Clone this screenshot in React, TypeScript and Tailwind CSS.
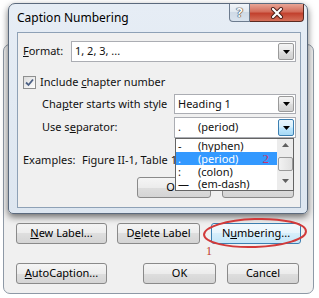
import React from "react";

function Tri({ color = "#000" }: { color?: string }) {
  return (
    <svg width="7" height="4" viewBox="0 0 7 4">
      <path d="M0 0 H7 L3.5 4 Z" fill={color} />
    </svg>
  );
}

function Combo({ children, active }: { children: React.ReactNode; active?: boolean }) {
  return (
    <div className="flex h-full w-full border border-[#abadb3] bg-white">
      <div className="flex flex-1 items-center whitespace-nowrap pl-[3px]">{children}</div>
      <div
        className={`m-[1px] flex w-[16px] items-center justify-center rounded-[2px] border ${
          active
            ? "border-[#3c7fb1] bg-[linear-gradient(#eaf6fd,#d9f0fc_45%,#bee6fd_55%,#a7d9f5)]"
            : "border-[#9a9a9a] bg-[linear-gradient(#f4f4f4,#e8e8e8_45%,#dcdcdc_55%,#d0d0d0)]"
        }`}
      >
        <Tri />
      </div>
    </div>
  );
}

function WinButton({
  children,
  className = "",
  hover,
}: {
  children: React.ReactNode;
  className?: string;
  hover?: boolean;
}) {
  return (
    <div
      className={`flex h-[21px] shrink-0 items-center justify-center whitespace-nowrap rounded-[3px] border text-black ${
        hover
          ? "border-[#3c7fb1] bg-[linear-gradient(#f4fafe,#e6f4fc_50%,#d6eefb_50%,#c5e6f8)]"
          : "border-[#8a8a8a] bg-[linear-gradient(#f5f5f5,#ececec_50%,#dedede_50%,#d4d4d4)]"
      } ${className}`}
    >
      {children}
    </div>
  );
}

export default function App() {
  return (
    <div className="relative h-[298px] w-[319px] overflow-hidden bg-white font-['Noto_Sans',sans-serif] text-[11px] text-[#111]">
      {/* Underlying Caption dialog */}
      <div className="absolute left-[3px] top-[44px] flex h-[250px] w-[311px] flex-col justify-end rounded-[7px] border border-[#8e99a6] bg-[#f0f0f0] pb-[9px] pl-[12px]">
        <div className="flex">
          <WinButton className="w-[91px]">
            <span>
              <u>N</u>ew Label...
            </span>
          </WinButton>
          <WinButton className="ml-[10px] w-[83px]">
            <span>
              D<u>e</u>lete Label
            </span>
          </WinButton>
          <WinButton className="ml-[11px] w-[90px]" hover>
            <span>
              N<u>u</u>mbering...
            </span>
          </WinButton>
        </div>
        <div className="mt-[19px] flex">
          <WinButton className="w-[91px]">
            <span>
              <u>A</u>utoCaption...
            </span>
          </WinButton>
          <WinButton className="ml-[36px] w-[73px]">OK</WinButton>
          <WinButton className="ml-[11px] w-[72px]">Cancel</WinButton>
        </div>
      </div>

      {/* Caption Numbering dialog */}
      <div className="absolute left-[8px] top-[3px] flex h-[211px] w-[300px] flex-col rounded-t-[7px] rounded-b-[5px] border border-[#5b6a7d] bg-[linear-gradient(#e6edf5,#dde6f0)] shadow-[0_3px_7px_rgba(0,0,0,0.55)]">
        <div className="relative h-[28px] shrink-0">
          <div className="whitespace-nowrap pl-[8px] pt-[5px] text-[12px] leading-[18px] text-black">Caption Numbering</div>
          <div className="absolute right-[3px] top-0 flex h-[18px]">
            <div className="flex w-[21px] items-center justify-center rounded-bl-[4px] border border-t-0 border-[#6c7b8e] bg-[linear-gradient(#f1f5f9,#dfe7ef_50%,#cfdae6_50%,#d9e3ee)]">
              <span className="text-[13px] font-bold leading-none text-white [text-shadow:0_0_1px_#333,0_0_1px_#333,0_0_1px_#333]">
                ?
              </span>
            </div>
            <div className="flex w-[54px] items-center justify-center rounded-br-[4px] border border-l-0 border-t-0 border-[#5a2a22] bg-[linear-gradient(#e8a595,#d36d5b_45%,#c2412e_55%,#d5705a)]">
              <svg width="14" height="12" viewBox="0 0 14 12">
                <path d="M3 2 L11 10 M11 2 L3 10" stroke="#4a1e18" strokeWidth="4" strokeLinecap="round" />
                <path d="M3 2 L11 10 M11 2 L3 10" stroke="#ffffff" strokeWidth="2.2" strokeLinecap="round" />
              </svg>
            </div>
          </div>
        </div>

        <div className="mb-[5px] ml-[8px] mr-[6px] flex flex-1 flex-col border border-[#8ea1b6] bg-[#f0f0f0] pl-[5px] pr-[4px]">
          {/* Format */}
          <div className="mt-[8px] flex h-[21px] items-center">
            <div className="w-[48px] whitespace-nowrap">
              <u>F</u>ormat:
            </div>
            <div className="h-full flex-1">
              <Combo>1, 2, 3, ...</Combo>
            </div>
          </div>

          {/* Include chapter number */}
          <div className="mt-[14px] flex h-[13px] items-center">
            <div className="flex h-[13px] w-[13px] items-center justify-center border border-[#8e8f8f] bg-[linear-gradient(135deg,#dcdcdc,#ffffff)]">
              <svg width="9" height="9" viewBox="0 0 9 9">
                <path d="M1 4.5 L3.5 7 L8 1.5" fill="none" stroke="#4d6185" strokeWidth="1.8" />
              </svg>
            </div>
            <span className="ml-[4px] whitespace-nowrap">
              Include <u>c</u>hapter number
            </span>
          </div>

          {/* Chapter starts with style */}
          <div className="mt-[5px] flex h-[20px] items-center">
            <div className="w-[151px] whitespace-nowrap pl-[19px]">
              Cha<u>p</u>ter starts with style
            </div>
            <div className="h-full w-[122px]">
              <Combo>Heading 1</Combo>
            </div>
          </div>

          {/* Use separator */}
          <div className="mt-[3px] flex h-[21px] items-center">
            <div className="w-[151px] whitespace-nowrap pl-[19px]">
              Use s<u>e</u>parator:
            </div>
            <div className="h-full w-[122px]">
              <Combo active>
                <span className="w-[20px]">.</span>
                <span>(period)</span>
              </Combo>
            </div>
          </div>

          {/* Examples */}
          <div className="mt-[14px] flex h-[16px] items-center whitespace-nowrap">
            <span className="w-[59px]">Examples:</span>
            <span>Figure II-1, Table 1-1</span>
          </div>

          {/* Buttons */}
          <div className="mt-[9px] flex justify-end pr-[2px]">
            <WinButton className="w-[74px]">OK</WinButton>
            <WinButton className="ml-[11px] w-[72px]">Cancel</WinButton>
          </div>
        </div>
      </div>

      {/* Open dropdown list */}
      <div className="absolute left-[175px] top-[138px] flex h-[53px] w-[119px] border border-[#646464] bg-white">
        <div className="flex flex-1 flex-col">
          <div className="flex h-[13px] items-center whitespace-nowrap pl-[2px] leading-none">
            <span className="w-[20px]">-</span>
            <span>(hyphen)</span>
          </div>
          <div className="flex h-[13px] items-center whitespace-nowrap bg-[#3399ff] pl-[2px] leading-none text-white">
            <span className="w-[20px]">.</span>
            <span>(period)</span>
            <span className="ml-[24px] font-['Liberation_Serif',serif] text-[13px] text-[#c8326e]">2</span>
          </div>
          <div className="flex h-[13px] items-center whitespace-nowrap pl-[2px] leading-none">
            <span className="w-[20px]">:</span>
            <span>(colon)</span>
          </div>
          <div className="flex h-[13px] items-center whitespace-nowrap pl-[2px] leading-none">
            <span className="w-[20px]">—</span>
            <span>(em-dash)</span>
          </div>
        </div>
        <div className="flex w-[16px] flex-col items-center bg-[#ececec]">
          <div className="flex h-[12px] items-center justify-center">
            <svg width="7" height="4" viewBox="0 0 7 4">
              <path d="M0 4 H7 L3.5 0 Z" fill="#606060" />
            </svg>
          </div>
          <div className="mt-[6px] h-[14px] w-[15px] rounded-[2px] border border-[#9a9a9a] bg-[linear-gradient(90deg,#f2f2f2,#e0e0e0)]" />
          <div className="flex flex-1 items-center justify-center">
            <Tri color="#606060" />
          </div>
        </div>
      </div>

      {/* Red annotations */}
      <svg className="pointer-events-none absolute left-0 top-0" width="319" height="298" viewBox="0 0 319 298">
        <ellipse cx="255" cy="233" rx="51" ry="14" fill="none" stroke="#d23a3a" strokeWidth="2" transform="rotate(-2 255 233)" />
      </svg>
      <div className="absolute left-[206px] top-[244px] font-['Liberation_Serif',serif] text-[12px] leading-[14px] text-[#c0392b]">
        1
      </div>
    </div>
  );
}
